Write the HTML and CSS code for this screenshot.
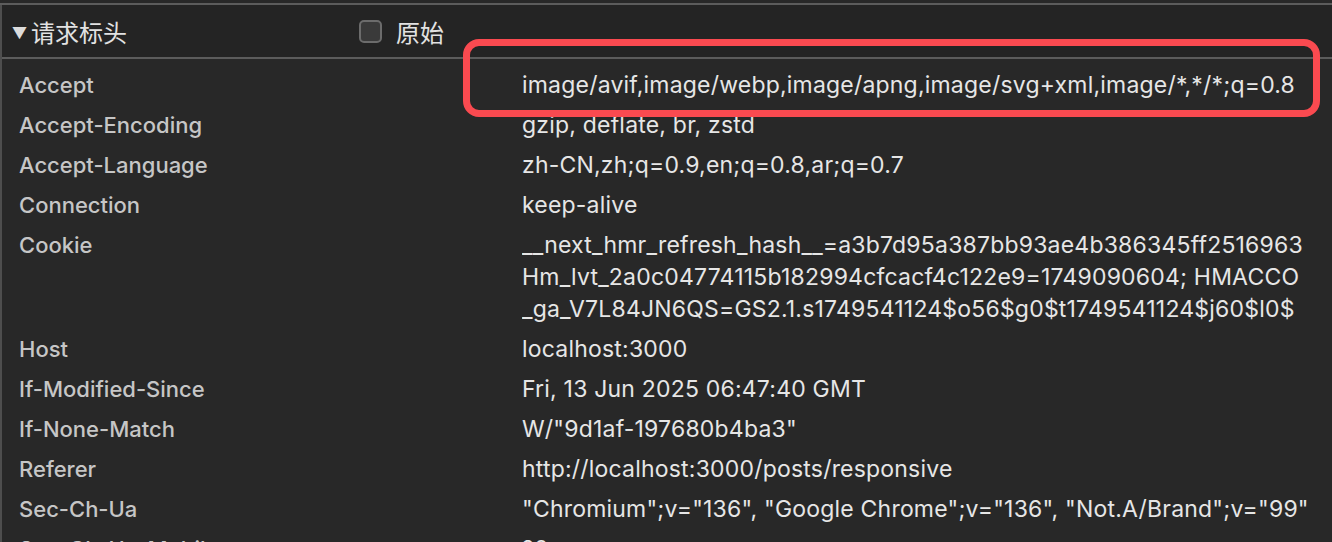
FILE: index.html
```html
<!DOCTYPE html>
<html lang="zh-CN">
<head>
    <meta charset="UTF-8">
    <meta name="viewport" content="width=device-width, initial-scale=1.0">
    <title>请求标头</title>
    <link rel="stylesheet" href="styles.css">
</head>
<body>
    <div class="panel">
        <div class="top-strip"></div>

        <div class="section-header">
            <div class="section-title"><span class="arrow">▼</span>请求标头</div>
            <label class="raw-toggle">
                <span class="checkbox"></span>
                <span>原始</span>
            </label>
        </div>

        <div class="headers">
            <div class="row">
                <div class="name">Accept</div>
                <div class="value">image/avif,image/webp,image/apng,image/svg+xml,image/*,*/*;q=0.8</div>
            </div>
            <div class="row">
                <div class="name">Accept-Encoding</div>
                <div class="value">gzip, deflate, br, zstd</div>
            </div>
            <div class="row">
                <div class="name">Accept-Language</div>
                <div class="value">zh-CN,zh;q=0.9,en;q=0.8,ar;q=0.7</div>
            </div>
            <div class="row">
                <div class="name">Connection</div>
                <div class="value">keep-alive</div>
            </div>
            <div class="row">
                <div class="name">Cookie</div>
                <div class="value">
                    <div>__next_hmr_refresh_hash__=a3b7d95a387bb93ae4b386345ff2516963</div>
                    <div>Hm_lvt_2a0c04774115b182994cfcacf4c122e9=1749090604; HMACCO</div>
                    <div>_ga_V7L84JN6QS=GS2.1.s1749541124$o56$g0$t1749541124$j60$l0$</div>
                </div>
            </div>
            <div class="row">
                <div class="name">Host</div>
                <div class="value">localhost:3000</div>
            </div>
            <div class="row">
                <div class="name">If-Modified-Since</div>
                <div class="value">Fri, 13 Jun 2025 06:47:40 GMT</div>
            </div>
            <div class="row">
                <div class="name">If-None-Match</div>
                <div class="value">W/"9d1af-197680b4ba3"</div>
            </div>
            <div class="row">
                <div class="name">Referer</div>
                <div class="value">http://localhost:3000/posts/responsive</div>
            </div>
            <div class="row">
                <div class="name">Sec-Ch-Ua</div>
                <div class="value">"Chromium";v="136", "Google Chrome";v="136", "Not.A/Brand";v="99"</div>
            </div>
            <div class="row">
                <div class="name">Sec-Ch-Ua-Mobile</div>
                <div class="value">?0</div>
            </div>
        </div>

        <!-- red annotation box drawn over the Accept value -->
        <div class="highlight"></div>
    </div>
</body>
</html>
```

FILE: styles.css
```css
:root {
    --bg: #282828;
    --header-bg: #242424;
    --line: #5c5c5c;
    --name: #c6c6c6;
    --value: #e6e6e6;
    --mark: #fa4a50;
}

* {
    margin: 0;
    padding: 0;
    box-sizing: border-box;
}

html, body {
    height: 100%;
    overflow: hidden;
}

body {
    background: var(--bg);
    font-family: Inter, "Noto Sans CJK SC", sans-serif;
    font-size: 22px;
    color: var(--value);
}

.panel {
    position: relative;
    min-height: 100%;
    border-left: 2px solid #4e4e4e;
}

.top-strip {
    height: 5px;
    border-bottom: 2px solid var(--line);
    margin-left: -2px;
    background: var(--bg);
}

.section-header {
    height: 54px;
    display: flex;
    align-items: center;
    background: var(--header-bg);
    border-bottom: 2px solid var(--line);
    padding-left: 10px;
}

.section-title {
    width: 347px;
    font-family: "Noto Sans CJK SC", sans-serif;
    font-size: 24px;
    color: #e2e2e2;
    display: flex;
    align-items: center;
}

.arrow {
    font-size: 15px;
    margin-right: 4px;
    color: #dcdcdc;
}

.raw-toggle {
    display: flex;
    align-items: center;
    gap: 14px;
    font-family: "Noto Sans CJK SC", sans-serif;
    font-size: 24px;
    color: #e2e2e2;
}

.checkbox {
    width: 23px;
    height: 23px;
    border: 2px solid #6c6c6c;
    border-radius: 5px;
    background: #3a3a3a;
}

.headers {
    padding-top: 6px;
}

.row {
    display: grid;
    grid-template-columns: 503px 1fr;
    padding: 4px 0 4px 17px;
    line-height: 32px;
}

.name {
    color: var(--name);
    font-weight: 500;
}

.value {
    color: var(--value);
    font-size: 23px;
    white-space: nowrap;
    overflow: hidden;
    letter-spacing: 0.2px;
}

.highlight {
    position: absolute;
    left: 461px;
    top: 39px;
    width: 857px;
    height: 78px;
    border: 7px solid var(--mark);
    border-radius: 16px;
}
```
